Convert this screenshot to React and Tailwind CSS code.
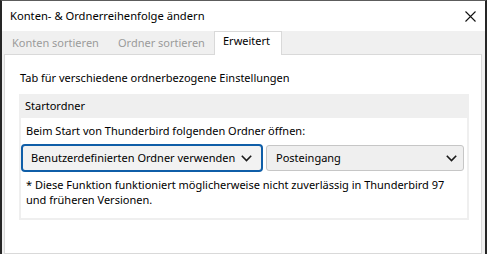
const Chevron = () => (
  <svg width="11" height="7" viewBox="0 0 11 7" className="shrink-0">
    <path d="M0.8 0.8 L5.5 5.5 L10.2 0.8" fill="none" stroke="#1a1a1a" strokeWidth="1.6" />
  </svg>
);

const App = () => {
  return (
    <div
      className="w-[487px] h-[254px] overflow-hidden flex flex-col bg-[#f0f0f0] border-x-2 border-x-[#262626] border-t border-t-[#5c5c5c] text-[11px] text-black whitespace-nowrap"
      style={{ fontFamily: '"Noto Sans", "Liberation Sans", sans-serif' }}
    >
      {/* Title bar */}
      <div className="h-[30px] bg-white flex items-center justify-between pl-[8px] pr-[8px] shrink-0">
        <span className="text-[11.2px]">Konten- &amp; Ordnerreihenfolge ändern</span>
        <svg width="11" height="11" viewBox="0 0 11 11" className="mr-[1px]">
          <path d="M0.5 0.5 L10.5 10.5 M10.5 0.5 L0.5 10.5" stroke="#111" strokeWidth="1.1" />
        </svg>
      </div>

      {/* Tabs */}
      <div className="h-[23px] flex items-end pl-[2px] shrink-0">
        <div className="w-[104px] h-[21px] flex items-center pl-[8px] text-[#9b9b9b]">Konten sortieren</div>
        <div className="w-[106px] h-[21px] flex items-center pl-[10px] text-[#9b9b9b]">Ordner sortieren</div>
        <div className="relative z-10 -mb-px h-[24px] w-[68px] bg-white border-t border-x border-[#d9d9d9] flex items-start pt-[1px] pl-[8px]">
          Erweitert
        </div>
      </div>

      {/* Panel */}
      <div className="flex-1 ml-[2px] mr-[3px] bg-white border border-[#d9d9d9] flex flex-col pt-[15px] pl-[14px] pr-[12px]">
        <div className="pl-[1px] leading-[16px]">Tab für verschiedene ordnerbezogene Einstellungen</div>

        <div className="mt-[8px] bg-[#efefef] px-[2px] pb-[2px] flex flex-col">
          <div className="h-[24px] flex items-center pl-[4px]">Startordner</div>
          <div className="bg-white flex flex-col pt-[5px] pb-[11px] pr-[3px]">
            <div className="pl-[5px] leading-[16px]">Beim Start von Thunderbird folgenden Ordner öffnen:</div>
            <div className="mt-[5px] flex items-center gap-[3px]">
              <div className="w-[242px] h-[28px] rounded-[4px] border-2 border-[#0f5ea8] bg-[#f2f2f2] flex items-center justify-between pl-[8px] pr-[9px]">
                <span>Benutzerdefinierten Ordner verwenden</span>
                <Chevron />
              </div>
              <div className="flex-1 h-[26px] rounded-[3px] border border-[#c6c6c6] bg-[#efefef] flex items-center justify-between pl-[9px] pr-[6px]">
                <span>Posteingang</span>
                <Chevron />
              </div>
            </div>
            <div className="mt-[5px] pl-[5px] leading-[15px]">
              * Diese Funktion funktioniert möglicherweise nicht zuverlässig in Thunderbird 97
              <br />
              und früheren Versionen.
            </div>
          </div>
        </div>
      </div>
    </div>
  );
};

export default App;
